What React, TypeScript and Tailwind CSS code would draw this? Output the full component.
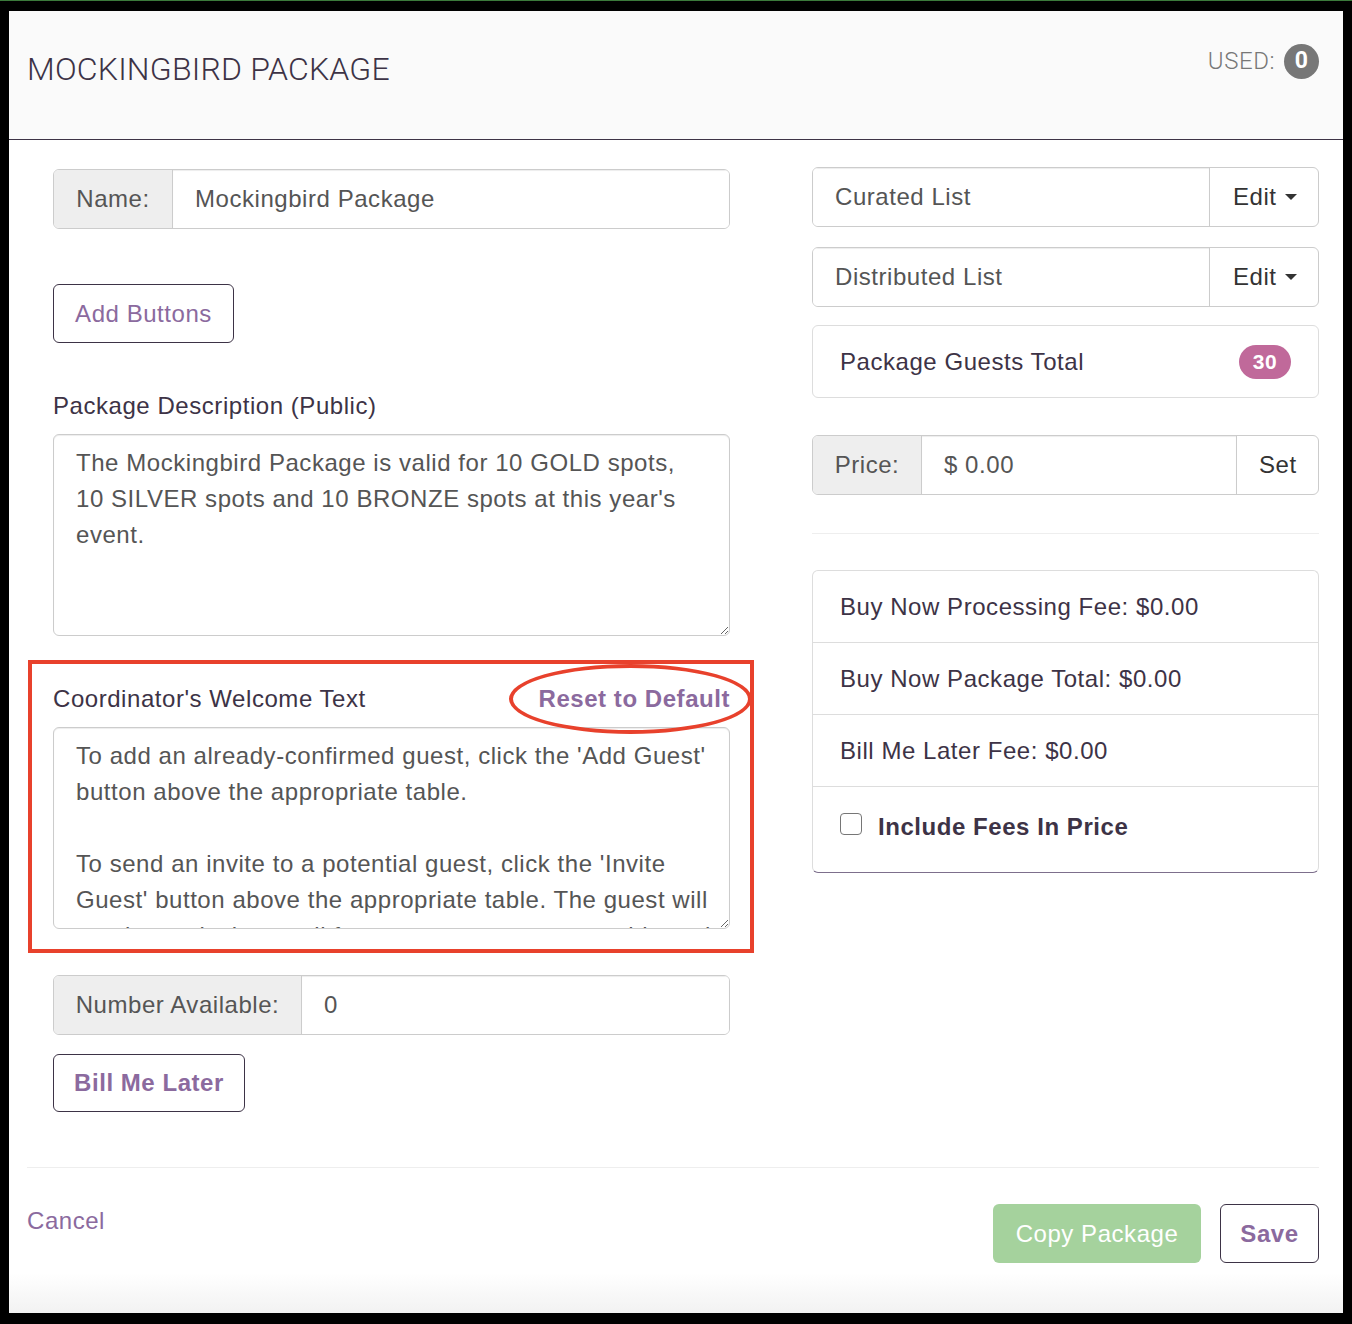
import React from "react";

const sans = { fontFamily: '"Liberation Sans", Arial, sans-serif', letterSpacing: "0.55px" };
const roboto = { fontFamily: 'Roboto, "Liberation Sans", Arial, sans-serif' };

function Caret() {
  return (
    <span className="ml-[8px] inline-block h-0 w-0 border-l-[6px] border-r-[6px] border-t-[6px] border-l-transparent border-r-transparent border-t-[#333] align-middle" />
  );
}

function AddonGroup({ label, value, addonW }: { label: string; value: string; addonW: string }) {
  return (
    <div className="flex h-[60px] w-full overflow-hidden rounded-[6px] border border-[#ccc] text-[24px]">
      <div className={`${addonW} flex shrink-0 items-center justify-center border-r border-[#ccc] bg-[#eee] text-[#555]`}>
        {label}
      </div>
      <div className="flex flex-1 items-center bg-white pl-[22px] text-[#555] shadow-[inset_0_1px_1px_rgba(0,0,0,0.075)]">
        {value}
      </div>
    </div>
  );
}

function ListWithEdit({ label }: { label: string }) {
  return (
    <div className="flex h-[60px] w-full overflow-hidden rounded-[6px] border border-[#ccc] text-[24px]">
      <div className="flex flex-1 items-center border-r border-[#ccc] bg-white pl-[22px] text-[#555] shadow-[inset_0_1px_1px_rgba(0,0,0,0.075)]">
        {label}
      </div>
      <div className="flex w-[108px] shrink-0 items-center pl-[23px] text-[#333]">
        Edit
        <Caret />
      </div>
    </div>
  );
}

const textareaCls =
  "block h-[202px] w-full overflow-hidden whitespace-pre rounded-[6px] border border-[#ccc] bg-white pl-[22px] pr-[14px] pt-[10px] text-[24px] leading-[36px] text-[#555] shadow-[inset_0_1px_1px_rgba(0,0,0,0.075)] outline-none resize-y";

const descriptionText =
  "The Mockingbird Package is valid for 10 GOLD spots,\n10 SILVER spots and 10 BRONZE spots at this year's\nevent.";

const welcomeText =
  "To add an already-confirmed guest, click the 'Add Guest'\nbutton above the appropriate table.\n\nTo send an invite to a potential guest, click the 'Invite\nGuest' button above the appropriate table. The guest will\nreceive an invite email for an open seat at your table and\ncan accept it online.";

export default function App() {
  return (
    <div className="min-h-[1324px] w-[1352px] border-t border-[#3b7a3b] bg-black pb-[11px] pl-[9px] pr-[9px] pt-[10px]" style={sans}>
      <div className="flex h-[1302px] w-[1334px] flex-col bg-white">
        {/* modal header */}
        <div className="flex h-[129px] shrink-0 items-start justify-between border-b border-[#3d3346] bg-[#fafafa] pl-[18px] pr-[24px]">
          <h1 className="mt-[40px] text-[32px] font-light leading-[36px] tracking-[0.2px] text-[#3d3346]" style={roboto}>
            MOCKINGBIRD PACKAGE
          </h1>
          <div className="mt-[32px] flex items-center gap-[9px] text-[24px] font-light text-[#777]" style={roboto}>
            <span>USED:</span>
            <span className="flex h-[35px] w-[35px] items-center justify-center rounded-full bg-[#777] text-[23px] font-bold text-white">
              0
            </span>
          </div>
        </div>

        {/* modal body */}
        <div className="flex justify-between pl-[44px] pr-[24px]">
          {/* left column */}
          <div className="flex w-[677px] flex-col">
            <div className="mt-[29px]">
              <AddonGroup label="Name:" value="Mockingbird Package" addonW="w-[119px]" />
            </div>
            <button className="mt-[55px] h-[59px] w-[181px] rounded-[6px] border border-[#3d3346] bg-white text-[24px] text-[#8b6a9e]">
              Add Buttons
            </button>
            <div className="mt-[45px] text-[24px] leading-[36px] text-[#3d3346]">Package Description (Public)</div>
            <textarea readOnly wrap="off" className={`mt-[10px] ${textareaCls}`} style={sans} defaultValue={descriptionText} />

            <div className="relative mt-[45px]">
              <div className="flex items-center justify-between text-[24px] leading-[36px]">
                <span className="text-[#3d3346]">Coordinator's Welcome Text</span>
                <span className="font-bold text-[#8b6a9e]">Reset to Default</span>
              </div>
              <textarea readOnly wrap="off" className={`mt-[10px] ${textareaCls}`} style={sans} defaultValue={welcomeText} />
              {/* highlight annotations */}
              <div className="pointer-events-none absolute -bottom-[24px] -left-[25px] -right-[24px] -top-[21px] border-[4px] border-[#e8412c]" />
              <div className="pointer-events-none absolute left-[456px] top-[-17px] h-[70px] w-[243px] rounded-[50%] border-[4px] border-[#e8412c]" />
            </div>

            <div className="mt-[46px]">
              <AddonGroup label="Number Available:" value="0" addonW="w-[248px]" />
            </div>
            <button className="mt-[19px] h-[58px] w-[192px] rounded-[6px] border border-[#3d3346] bg-white text-[24px] font-bold text-[#8b6a9e]">
              Bill Me Later
            </button>
          </div>

          {/* right column */}
          <div className="flex w-[507px] flex-col">
            <div className="mt-[27px]">
              <ListWithEdit label="Curated List" />
            </div>
            <div className="mt-[20px]">
              <ListWithEdit label="Distributed List" />
            </div>
            <div className="mt-[18px] flex h-[73px] items-center justify-between rounded-[6px] border border-[#ddd] pl-[27px] pr-[27px] text-[24px] text-[#3d3346]">
              <span>Package Guests Total</span>
              <span className="flex h-[34px] w-[52px] items-center justify-center rounded-full bg-[#c0699a] text-[21px] font-bold text-white">
                30
              </span>
            </div>
            <div className="mt-[37px] flex h-[60px] w-full overflow-hidden rounded-[6px] border border-[#ccc] text-[24px]">
              <div className="flex w-[109px] shrink-0 items-center justify-center border-r border-[#ccc] bg-[#eee] text-[#555]">
                Price:
              </div>
              <div className="flex flex-1 items-center border-r border-[#ccc] bg-white pl-[22px] text-[#555] shadow-[inset_0_1px_1px_rgba(0,0,0,0.075)]">
                $ 0.00
              </div>
              <div className="flex w-[81px] shrink-0 items-center pl-[22px] text-[#333]">Set</div>
            </div>
            <div className="mt-[38px] border-t border-[#eee]" />
            <div className="mt-[36px] rounded-[6px] border border-[#ddd] border-b-[#7d6f8c] text-[24px] text-[#3d3346]">
              <div className="flex h-[71px] items-center pl-[27px]">Buy Now Processing Fee: $0.00</div>
              <div className="flex h-[72px] items-center border-t border-[#ddd] pl-[27px]">Buy Now Package Total: $0.00</div>
              <div className="flex h-[72px] items-center border-t border-[#ddd] pl-[27px]">Bill Me Later Fee: $0.00</div>
              <div className="flex h-[86px] items-start border-t border-[#ddd] pl-[27px] pt-[26px]">
                <span className="h-[22px] w-[22px] shrink-0 rounded-[4px] border border-[#767676] bg-white" />
                <span className="ml-[16px] -mt-[4px] font-bold leading-[36px]">Include Fees In Price</span>
              </div>
            </div>
          </div>
        </div>

        {/* modal footer */}
        <div className="mt-[55px] pl-[18px] pr-[24px]">
          <div className="border-t border-[#eee]" />
          <div className="mt-[36px] flex items-start justify-between">
            <span className="-mt-[1px] text-[24px] leading-[36px] text-[#8b6a9e]">Cancel</span>
            <div className="flex gap-[19px]">
              <button className="h-[59px] w-[208px] rounded-[6px] bg-[#a5d29d] text-[24px] text-white">Copy Package</button>
              <button className="h-[59px] w-[99px] rounded-[6px] border border-[#3d3346] bg-white text-[24px] font-bold text-[#8b6a9e]">
                Save
              </button>
            </div>
          </div>
        </div>
        <div className="mt-auto h-[40px] bg-gradient-to-b from-white to-[#f2f2f2]" />
      </div>
    </div>
  );
}
